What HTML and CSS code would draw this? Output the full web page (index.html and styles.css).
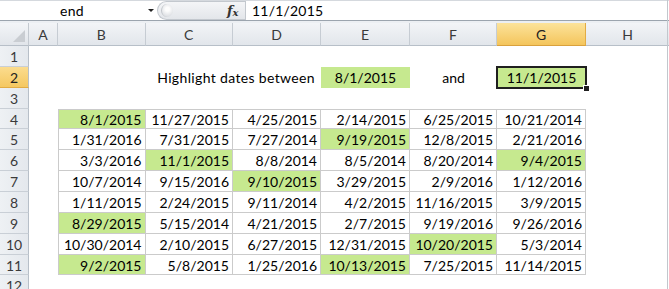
FILE: index.html
```html
<!DOCTYPE html>
<html>
<head>
<meta charset="utf-8">
<link rel="stylesheet" href="styles.css">
</head>
<body>
<div class="app">
  <div class="fbar">
    <div class="namebox"><span class="name">end</span><span class="dd"></span></div>
    <div class="pill"><span class="knob"></span><span class="fx">f<span class="x">x</span></span></div>
    <div class="formula">11/1/2015</div>
  </div>
  <div class="strip"></div>
  <div class="sheet">
    <div class="corner"><span class="tri"></span></div>
    <div class="ch">A</div><div class="ch">B</div><div class="ch">C</div><div class="ch">D</div><div class="ch">E</div><div class="ch">F</div><div class="ch sel">G</div><div class="ch last">H</div>

    <div class="rh">1</div><div class="row-fill"></div>

    <div class="rh sel">2</div>
    <div class="c"></div>
    <div class="c label">Highlight dates between</div>
    <div class="c ctr g">8/1/2015</div>
    <div class="c ctr">and</div>
    <div class="c ctr g active">11/1/2015<span class="handle"></span></div>
    <div class="c"></div>

    <div class="rh">3</div><div class="row-fill"></div>

    <div class="rh">4</div><div class="c"></div>
    <div class="c t tl top g">8/1/2015</div><div class="c t top">11/27/2015</div><div class="c t top">4/25/2015</div><div class="c t top">2/14/2015</div><div class="c t top">6/25/2015</div><div class="c t top">10/21/2014</div><div class="c"></div>

    <div class="rh">5</div><div class="c"></div>
    <div class="c t tl">1/31/2016</div><div class="c t">7/31/2015</div><div class="c t">7/27/2014</div><div class="c t g">9/19/2015</div><div class="c t">12/8/2015</div><div class="c t">2/21/2016</div><div class="c"></div>

    <div class="rh">6</div><div class="c"></div>
    <div class="c t tl">3/3/2016</div><div class="c t g">11/1/2015</div><div class="c t">8/8/2014</div><div class="c t">8/5/2014</div><div class="c t">8/20/2014</div><div class="c t g">9/4/2015</div><div class="c"></div>

    <div class="rh">7</div><div class="c"></div>
    <div class="c t tl">10/7/2014</div><div class="c t">9/15/2016</div><div class="c t g">9/10/2015</div><div class="c t">3/29/2015</div><div class="c t">2/9/2016</div><div class="c t">1/12/2016</div><div class="c"></div>

    <div class="rh">8</div><div class="c"></div>
    <div class="c t tl">1/11/2015</div><div class="c t">2/24/2015</div><div class="c t">9/11/2014</div><div class="c t">4/2/2015</div><div class="c t">11/16/2015</div><div class="c t">3/9/2015</div><div class="c"></div>

    <div class="rh">9</div><div class="c"></div>
    <div class="c t tl g">8/29/2015</div><div class="c t">5/15/2014</div><div class="c t">4/21/2015</div><div class="c t">2/7/2015</div><div class="c t">9/19/2016</div><div class="c t">9/26/2016</div><div class="c"></div>

    <div class="rh">10</div><div class="c"></div>
    <div class="c t tl">10/30/2014</div><div class="c t">2/10/2015</div><div class="c t">6/27/2015</div><div class="c t">12/31/2015</div><div class="c t g">10/20/2015</div><div class="c t">5/3/2014</div><div class="c"></div>

    <div class="rh">11</div><div class="c"></div>
    <div class="c t tl g">9/2/2015</div><div class="c t">5/8/2015</div><div class="c t">1/25/2016</div><div class="c t g">10/13/2015</div><div class="c t">7/25/2015</div><div class="c t">11/14/2015</div><div class="c"></div>

    <div class="rh">12</div><div class="row-fill"></div>
  </div>
  <div class="vline"></div>
</div>
</body>
</html>
```

FILE: styles.css
```css
* { box-sizing: border-box; }
html, body { margin: 0; padding: 0; }
body {
  width: 669px;
  height: 289px;
  overflow: hidden;
  background: #fff;
  font-family: Lato, "Liberation Sans", sans-serif;
  font-size: 14px;
  color: #000;
}
.app {
  position: relative;
  width: 669px;
  height: 289px;
  overflow: hidden;
}
.fbar {
  display: flex;
  height: 21px;
  border-top: 1px solid #d5d9de;
  border-bottom: 1px solid #9ba4ae;
  background: #fff;
}
.namebox {
  width: 157px;
  display: flex;
  align-items: center;
  position: relative;
}
.name {
  padding-left: 60px;
  line-height: 19px;
  letter-spacing: 0.3px;
}
.dd {
  position: absolute;
  left: 148px;
  top: 8px;
  width: 0;
  height: 0;
  border-left: 3px solid transparent;
  border-right: 3px solid transparent;
  border-top: 3px solid #222;
}
.pill {
  width: 88px;
  height: 19px;
  border: 1px solid #c3c8ce;
  border-right: none;
  border-radius: 10px 0 0 10px;
  background: linear-gradient(#f4f5f7, #e3e6ea);
  position: relative;
}
.knob {
  position: absolute;
  left: 3px;
  top: 2px;
  width: 12px;
  height: 13px;
  border-radius: 50%;
  background: radial-gradient(circle at 50% 40%, #fdfdfd 20%, #dadde1 80%);
  border-left: 1px solid #c2c6cb;
}
.fx {
  position: absolute;
  left: 69px;
  top: 1px;
  font-family: "DejaVu Serif", "Liberation Serif", serif;
  font-style: italic;
  font-weight: bold;
  font-size: 13px;
  color: #333;
  line-height: 16px;
}
.fx .x {
  font-size: 10px;
  position: relative;
  top: 1px;
}
.formula {
  flex: 1;
  border-left: 1px solid #c3c8ce;
  padding-left: 6px;
  line-height: 19px;
  letter-spacing: 0.2px;
}
.strip {
  height: 2px;
  background: #eceff3;
}
.sheet {
  display: grid;
  grid-template-columns: 29px 29px 87.5px 87.5px 88px 89px 87px 89px 1fr;
  grid-template-rows: 23px repeat(12, 20.86px);
}
.corner {
  background: linear-gradient(#f3f5f8, #e1e5ea);
  border-right: 1px solid #c3c9d0;
  border-bottom: 1px solid #b7bfc8;
  position: relative;
}
.tri {
  position: absolute;
  right: 3px;
  bottom: 3px;
  width: 0;
  height: 0;
  border-left: 12px solid transparent;
  border-bottom: 12px solid #c9cdd2;
}
.ch {
  background: linear-gradient(#f2f4f7, #e2e6eb);
  border-right: 1px solid #c6ccd3;
  border-bottom: 1px solid #b7bfc8;
  text-align: center;
  line-height: 23px;
  color: #3a3a3a;
}
.ch.sel {
  background: linear-gradient(#fce39b, #f4c55c);
  border-right-color: #e2ac44;
  border-bottom-color: #d9a13d;
  color: #222;
}
.ch.last { border-right: none; }
.rh {
  background: linear-gradient(90deg, #eef1f4, #e4e8ed);
  border-right: 1px solid #b7bfc8;
  border-bottom: 1px solid #c9cfd6;
  text-align: center;
  line-height: 21px;
  color: #3a3a3a;
}
.rh.sel {
  background: linear-gradient(#fbdc8e, #f5c861);
  border-bottom-color: #e2ac44;
  color: #222;
}
.row-fill {
  grid-column: 2 / -1;
}
.c {
  line-height: 22px;
  white-space: nowrap;
  padding: 0 3px;
  text-align: right;
  position: relative;
}
.label {
  grid-column: 3 / 6;
  padding-right: 6px;
  letter-spacing: 0.35px;
}
.ctr { text-align: center; }
.t {
  border-right: 1px solid #cbcbcb;
  border-bottom: 1px solid #cbcbcb;
  line-height: 21px;
}
.tl { border-left: 1px solid #cbcbcb; }
.top { border-top: 1px solid #cbcbcb; line-height: 20px; }
.g { background: #c6e98f; }
.active {
  outline: 2px solid #1f1f1f;
  outline-offset: -1px;
  z-index: 2;
}
.handle {
  position: absolute;
  right: -3px;
  bottom: -3px;
  width: 6px;
  height: 6px;
  background: #1f1f1f;
  border: 1px solid #fff;
  border-right: none;
  border-bottom: none;
}
.vline {
  position: absolute;
  left: 667px;
  top: 0;
  width: 1px;
  height: 289px;
  background: #c2c7cd;
}
```
